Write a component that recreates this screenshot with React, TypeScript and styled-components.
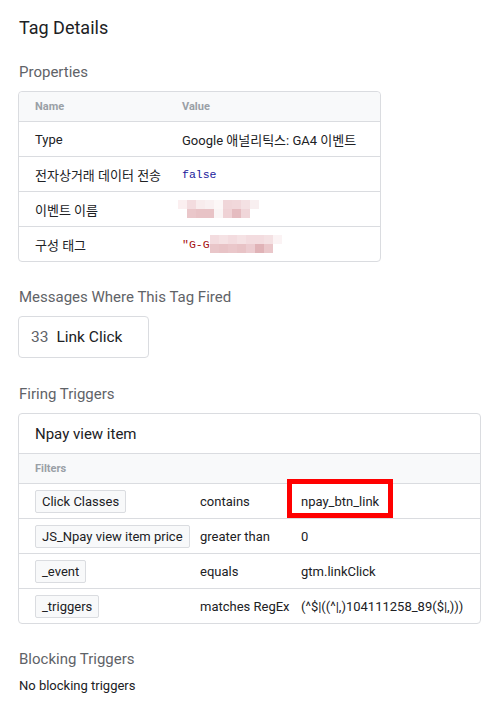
import React from "react";
import styled, { createGlobalStyle } from "styled-components";

const GlobalStyle = createGlobalStyle`
  body {
    margin: 0;
    background: #fff;
    font-family: Roboto, "Noto Sans CJK KR", Arial, sans-serif;
    color: #202124;
  }
`;

const Page = styled.div`
  padding: 16px 18px 0 18px;
  display: flex;
  flex-direction: column;
  align-items: flex-start;
`;

const Title = styled.h1`
  margin: 0 0 0 1px;
  font-size: 18px;
  line-height: 24px;
  font-weight: 400;
  color: #202124;
`;

const SectionTitle = styled.h2<{ $top: number }>`
  margin: ${(p) => p.$top}px 0 9px 1px;
  font-size: 15px;
  line-height: 20px;
  font-weight: 400;
  color: #5f6368;
`;

const Card = styled.div<{ $width: number }>`
  width: ${(p) => p.$width}px;
  box-sizing: border-box;
  border: 1px solid #dadce0;
  border-radius: 4px;
`;

const HeadRow = styled.div<{ $cols: string }>`
  display: grid;
  grid-template-columns: ${(p) => p.$cols};
  align-items: center;
  height: 29px;
  padding-left: 16px;
  background: #f8f9fa;
  border-radius: 4px 4px 0 0;
  font-size: 11px;
  font-weight: 700;
  color: #9aa0a6;
`;

const FilterHead = styled(HeadRow)`
  border-radius: 0;
  border-top: 1px solid #dadce0;
`;

const Row = styled.div<{ $cols: string }>`
  display: grid;
  grid-template-columns: ${(p) => p.$cols};
  align-items: stretch;
  height: 34px;
  padding-left: 16px;
  border-top: 1px solid #dadce0;
  font-size: 13px;
  color: #202124;
`;

const Cell = styled.div<{ $shift?: number }>`
  position: relative;
  white-space: nowrap;
  display: flex;
  align-items: center;
  margin-left: ${(p) => p.$shift ?? 0}px;
`;

const Mono = styled.span<{ $color: string }>`
  font-family: "Liberation Mono", "DejaVu Sans Mono", monospace;
  font-size: 11.5px;
  color: ${(p) => p.$color};
`;

const MessageBox = styled.div`
  width: 131px;
  height: 42px;
  box-sizing: border-box;
  border: 1px solid #dadce0;
  border-radius: 4px;
  display: flex;
  align-items: center;
  padding-left: 12px;
  font-size: 15.5px;
  color: #202124;
`;

const MsgNum = styled.span`
  color: #5f6368;
  margin-right: 8px;
`;

const TriggerName = styled.div`
  height: 39px;
  display: flex;
  align-items: center;
  padding-left: 16px;
  font-size: 15px;
  color: #202124;
`;

const Chip = styled.span`
  display: inline-flex;
  align-items: center;
  height: 21px;
  padding: 0 6px;
  background: #f8f9fa;
  border: 1px solid #dadce0;
  border-radius: 2px;
  font-size: 13px;
  color: #202124;
`;

const Highlight = styled.span`
  position: absolute;
  left: -14px;
  top: -5px;
  width: 106px;
  height: 39px;
  box-sizing: border-box;
  border: 5px solid #ff0000;
  pointer-events: none;
`;

const Plain = styled.div`
  margin: 0 0 0 1px;
  font-size: 13px;
  line-height: 16px;
  color: #202124;
`;

type MosaicProps = { rows: string[][]; cell: number };

const Mosaic: React.FC<MosaicProps> = ({ rows, cell }) => (
  <svg width={rows[0].length * cell} height={rows.length * cell} style={{ display: "block" }}>
    {rows.map((r, y) =>
      r.map((c, x) => (
        <rect key={`${x}-${y}`} x={x * cell} y={y * cell} width={cell} height={cell} fill={c} />
      ))
    )}
  </svg>
);

const eventNameBlur = [
  ["#fbeff0", "#f3dcdf", "#f8eced", "#f9f0f1", "#fcf7f7", "#f0d6d9", "#f1d8db", "#f4e1e3", "#f8eff0"],
  ["#ffffff", "#eac7ca", "#e8c3c6", "#e8c3c6", "#faf5f5", "#efd2d5", "#e5bcc0", "#f0d6d9", "#ffffff"],
];

const tagIdBlur = [
  ["#f3dcdf", "#f5e2e4", "#f3dcdf", "#f5e2e4", "#f3dcdf", "#f3dcdf", "#f4e1e3", "#fbf3f4"],
  ["#e9c6c9", "#e8c3c6", "#eac7ca", "#e8c3c6", "#ecccd0", "#e0b3b7", "#eac7ca", "#ffffff"],
];

const propCols = "147px 1fr";
const filterCols = "165px 101px 1fr";

const filters = [
  { name: "Click Classes", op: "contains", value: "npay_btn_link", marked: true },
  { name: "JS_Npay view item price", op: "greater than", value: "0" },
  { name: "_event", op: "equals", value: "gtm.linkClick" },
  { name: "_triggers", op: "matches RegEx", value: "(^$|((^|,)104111258_89($|,)))" },
];

export default function App() {
  return (
    <>
      <GlobalStyle />
      <Page>
        <Title>Tag Details</Title>

        <SectionTitle $top={22}>Properties</SectionTitle>
        <Card $width={363}>
          <HeadRow $cols={propCols}>
            <Cell>Name</Cell>
            <Cell>Value</Cell>
          </HeadRow>
          <Row $cols={propCols}>
            <Cell>Type</Cell>
            <Cell>Google 애널리틱스: GA4 이벤트</Cell>
          </Row>
          <Row $cols={propCols}>
            <Cell>전자상거래 데이터 전송</Cell>
            <Cell>
              <Mono $color="#1a1a9c">false</Mono>
            </Cell>
          </Row>
          <Row $cols={propCols}>
            <Cell>이벤트 이름</Cell>
            <Cell $shift={-4}>
              <Mosaic rows={eventNameBlur} cell={9} />
            </Cell>
          </Row>
          <Row $cols={propCols}>
            <Cell>구성 태그</Cell>
            <Cell>
              <Mono $color="#a50e0e">"G-G</Mono>
              <Mosaic rows={tagIdBlur} cell={9} />
            </Cell>
          </Row>
        </Card>

        <SectionTitle $top={25}>Messages Where This Tag Fired</SectionTitle>
        <MessageBox>
          <MsgNum>33</MsgNum>
          Link Click
        </MessageBox>

        <SectionTitle $top={26}>Firing Triggers</SectionTitle>
        <Card $width={463}>
          <TriggerName>Npay view item</TriggerName>
          <FilterHead $cols="1fr">
            <Cell>Filters</Cell>
          </FilterHead>
          {filters.map((f) => (
            <Row $cols={filterCols} key={f.name}>
              <Cell>
                <Chip>{f.name}</Chip>
              </Cell>
              <Cell>{f.op}</Cell>
              <Cell>
                {f.value}
                {f.marked && <Highlight />}
              </Cell>
            </Row>
          ))}
        </Card>

        <SectionTitle $top={25}>Blocking Triggers</SectionTitle>
        <Plain>No blocking triggers</Plain>
      </Page>
    </>
  );
}
